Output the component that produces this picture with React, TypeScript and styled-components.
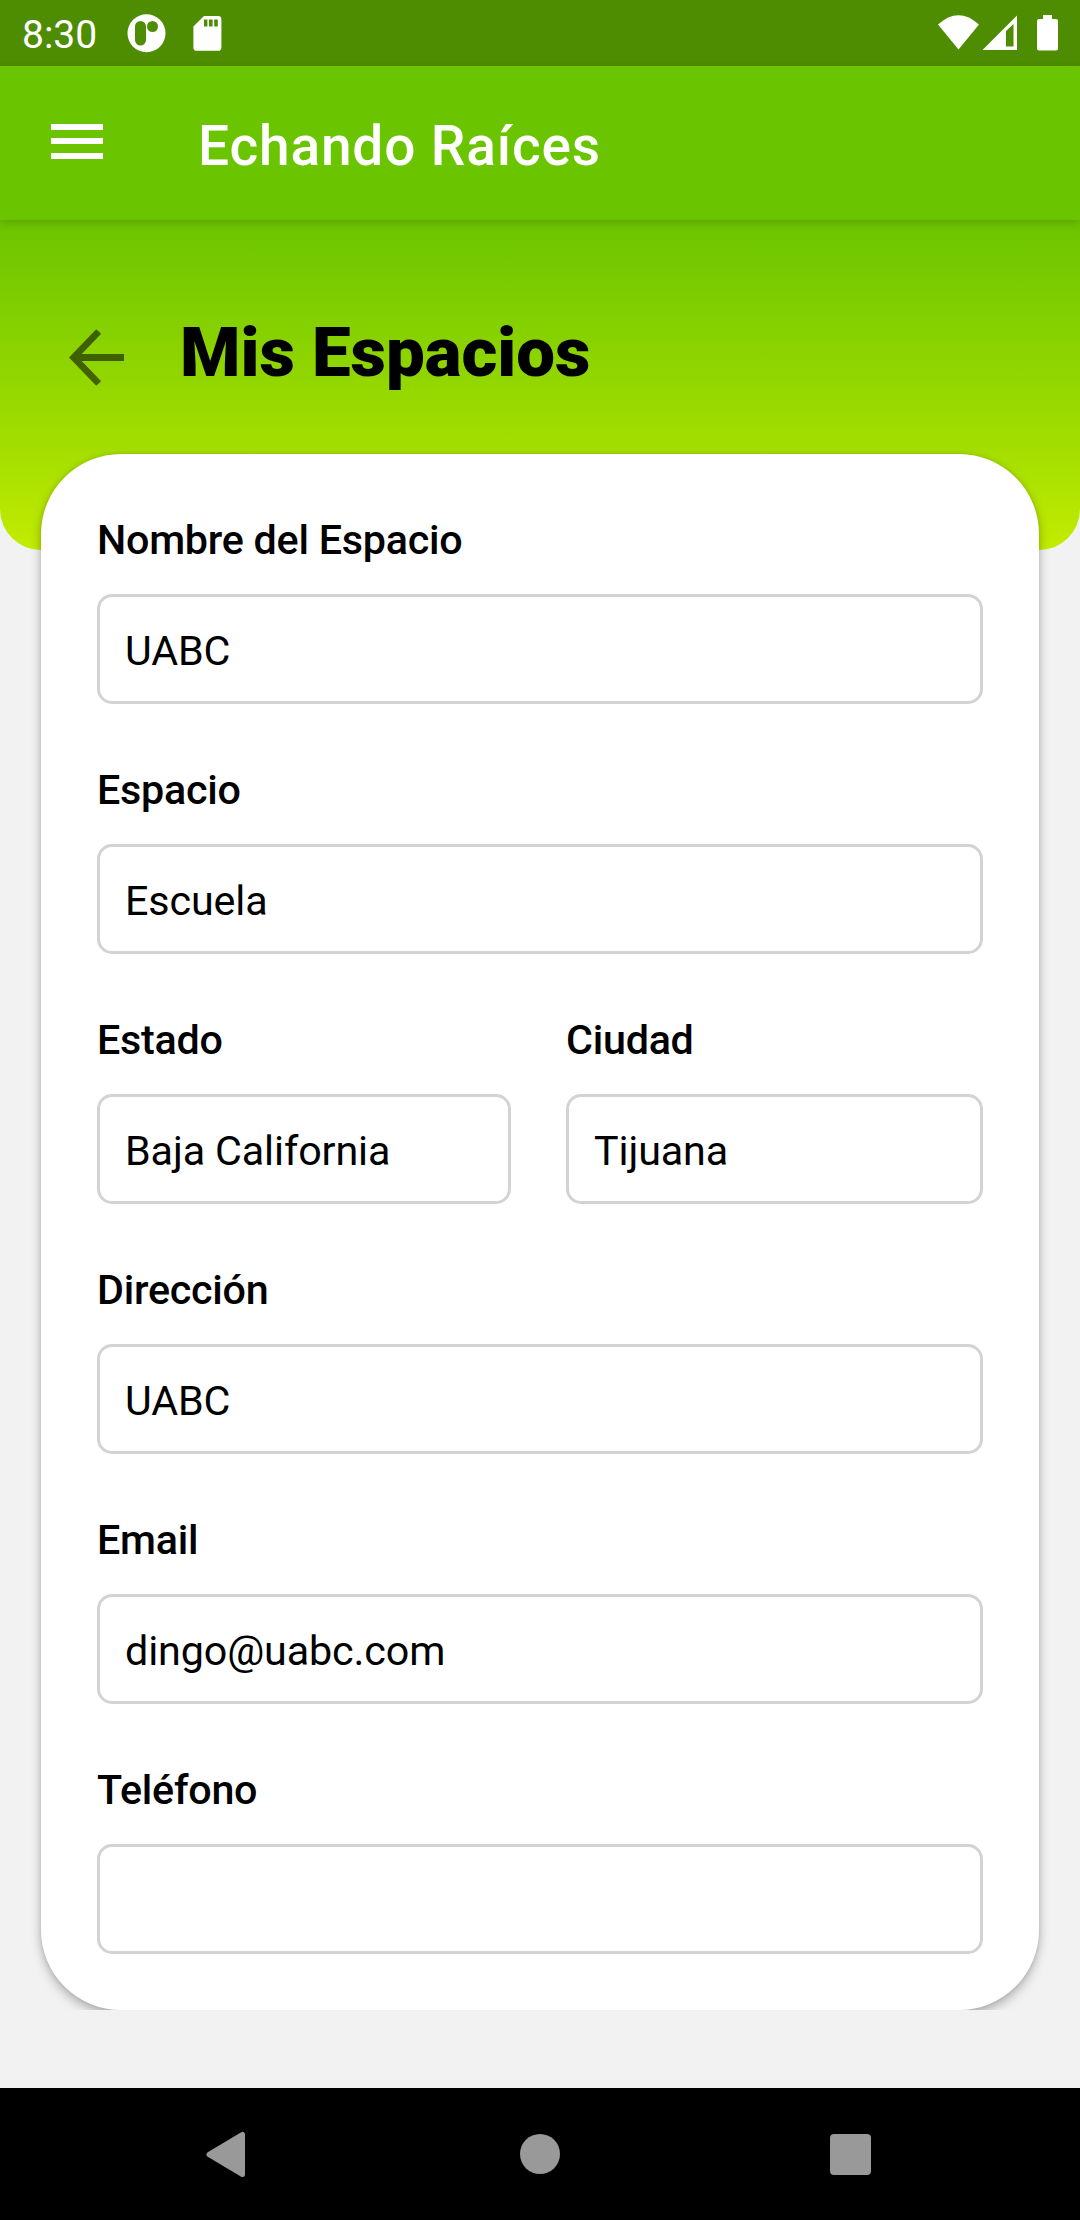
import React from "react";
import styled, { createGlobalStyle } from "styled-components";

const Global = createGlobalStyle`
  * { box-sizing: border-box; }
  body { margin: 0; background: #f2f2f2; font-family: Roboto, "Noto Sans", sans-serif; color: #000; }
`;

const Screen = styled.div`
  width: 1080px;
  height: 2220px;
  display: flex;
  flex-direction: column;
  background: #f2f2f2;
  overflow: hidden;
`;

const StatusBar = styled.header`
  flex: none;
  height: 66px;
  display: flex;
  align-items: center;
  padding: 0 22px;
  background: #4e8c02;
  color: #fff;
`;

const Clock = styled.span`
  width: 105px;
  font-size: 39px;
  line-height: 66px;
  padding-top: 3px;
`;

const Glyphs = styled.svg`
  display: block;
  flex: none;
  fill: #fff;
`;

const MenuIcon = styled(Glyphs)`
  margin-bottom: 3px;
`;

const Spacer = styled.div`
  flex: 1;
`;

const AppBar = styled.div`
  flex: none;
  height: 154px;
  display: flex;
  align-items: center;
  background: #6bc400;
  color: #fff;
  padding-left: 51px;
  z-index: 1;
  box-shadow: 0 3px 8px rgba(0, 0, 0, 0.16);
`;

const AppTitle = styled.h1`
  margin: 5px 0 0 95px;
  font-size: 55px;
  line-height: 64px;
  font-weight: 500;
  letter-spacing: 0.85px;
`;

const Content = styled.main`
  flex: none;
  height: 1790px;
  overflow: hidden;
`;

const Hero = styled.section`
  height: 330px;
  padding: 98px 0 0 66px;
  display: flex;
  align-items: flex-start;
  background: linear-gradient(#6bc400, #a6df00 72%, #c3ec00);
  border-radius: 0 0 41px 41px;
`;

const PageTitle = styled.h2`
  margin: -5px 0 0 52px;
  font-size: 69px;
  line-height: 80px;
  font-weight: 900;
`;

const Card = styled.form`
  height: 1556px;
  margin: -96px 41px 0;
  padding: 61px 56px 55px;
  background: #fff;
  border-radius: 80px;
  box-shadow: 0 5px 11px rgba(0, 0, 0, 0.27), 0 0 4px rgba(0, 0, 0, 0.1);
`;

const Row = styled.div`
  display: flex;
  gap: 55px;
  height: 250px;
`;

const Field = styled.label<{ $width?: number }>`
  ${(p) => (p.$width ? `flex: none; width: ${p.$width}px;` : "flex: 1;")}
  display: flex;
  flex-direction: column;
  gap: 29px;
`;

const Caption = styled.span`
  font-size: 41.25px;
  line-height: 50px;
  font-weight: 500;
  letter-spacing: -0.25px;
`;

const Value = styled.span`
  height: 110px;
  border: 3px solid #d3d3d3;
  border-radius: 15px;
  padding: 0 25px;
  font-size: 41.25px;
  line-height: 108px;
  letter-spacing: -0.12px;
`;

const NavBar = styled.nav`
  flex: none;
  margin-top: 78px;
  height: 132px;
  display: flex;
  align-items: center;
  justify-content: space-between;
  padding: 0 205px 0 203px;
  background: #000;
`;

type Entry = { label: string; value: string; width?: number };

const rows: Entry[][] = [
  [{ label: "Nombre del Espacio", value: "UABC" }],
  [{ label: "Espacio", value: "Escuela" }],
  [
    { label: "Estado", value: "Baja California", width: 414 },
    { label: "Ciudad", value: "Tijuana" },
  ],
  [{ label: "Dirección", value: "UABC" }],
  [{ label: "Email", value: "dingo@uabc.com" }],
  [{ label: "Teléfono", value: "" }],
];

export default function App() {
  return (
    <>
      <Global />
      <Screen>
        <StatusBar>
          <Clock>8:30</Clock>
          <Glyphs width="96" height="66" viewBox="127 0 96 66">
            <path
              fillRule="evenodd"
              d="M146.500 14.300a19 19 0 1 0 0 38a19 19 0 1 0 0-38zM140.500 21a5.500 5.500 0 0 1 5.500 5.500v13.500a5.500 5.500 0 0 1-11 0v-13.500a5.500 5.500 0 0 1 5.500-5.500zM152.500 21a5.500 5.500 0 1 1 0 11a5.500 5.500 0 1 1 0-11z"
            />
            <path
              fillRule="evenodd"
              d="M204 16h14a3.400 3.400 0 0 1 3.400 3.400v28a3.400 3.400 0 0 1-3.400 3.400h-21.200a3.400 3.400 0 0 1-3.400-3.400v-20.800zM204 19.500v7h3.400v-7zM209 19.500v7h3.600v-7zM214.200 19.500v7h3.600v-7z"
            />
          </Glyphs>
          <Spacer />
          <Glyphs width="122" height="66" viewBox="936 0 122 66">
            <path d="M938 24.500Q958.500 6 979 24.500L958.500 49.500z" />
            <path fillRule="evenodd" d="M1017 15.500V50h-34.500zM1006 31v15.500h7.500V24z" />
            <path d="M1043 15h9v4h4a2 2 0 0 1 2 2v27.500a2 2 0 0 1-2 2h-17a2 2 0 0 1-2-2v-27.500a2 2 0 0 1 2-2h4z" />
          </Glyphs>
        </StatusBar>
        <AppBar>
          <MenuIcon width="52" height="37" viewBox="0 0 52 37">
            <path d="M0 1h52v6H0zM0 15h52v6H0zM0 30h52v6H0z" />
          </MenuIcon>
          <AppTitle>Echando Raíces</AppTitle>
        </AppBar>
        <Content>
          <Hero>
            <svg width="62" height="80" viewBox="66 318 62 80" fill="none" stroke="#000" strokeWidth="6.800" opacity="0.54">
              <path d="M98.700 331.500L73.700 357.500L98.700 383.500M73.700 357.500H124" />
            </svg>
            <PageTitle>Mis Espacios</PageTitle>
          </Hero>
          <Card>
            {rows.map((row) => (
              <Row key={row[0].label}>
                {row.map((f) => (
                  <Field key={f.label} $width={f.width}>
                    <Caption>{f.label}</Caption>
                    <Value>{f.value}</Value>
                  </Field>
                ))}
              </Row>
            ))}
          </Card>
        </Content>
        <NavBar>
          <svg width="44" height="46" viewBox="0 0 44 46">
            <path d="M6 23.500L39.500 3.500V43.500z" fill="#999" stroke="#999" strokeWidth="5" strokeLinejoin="round" />
          </svg>
          <svg width="45" height="44" viewBox="0 0 45 44">
            <circle cx="24" cy="22" r="20" fill="#999" />
          </svg>
          <svg width="45" height="44" viewBox="0 0 45 44">
            <rect x="0" y="2" width="41" height="41" rx="4" fill="#999" />
          </svg>
        </NavBar>
      </Screen>
    </>
  );
}
